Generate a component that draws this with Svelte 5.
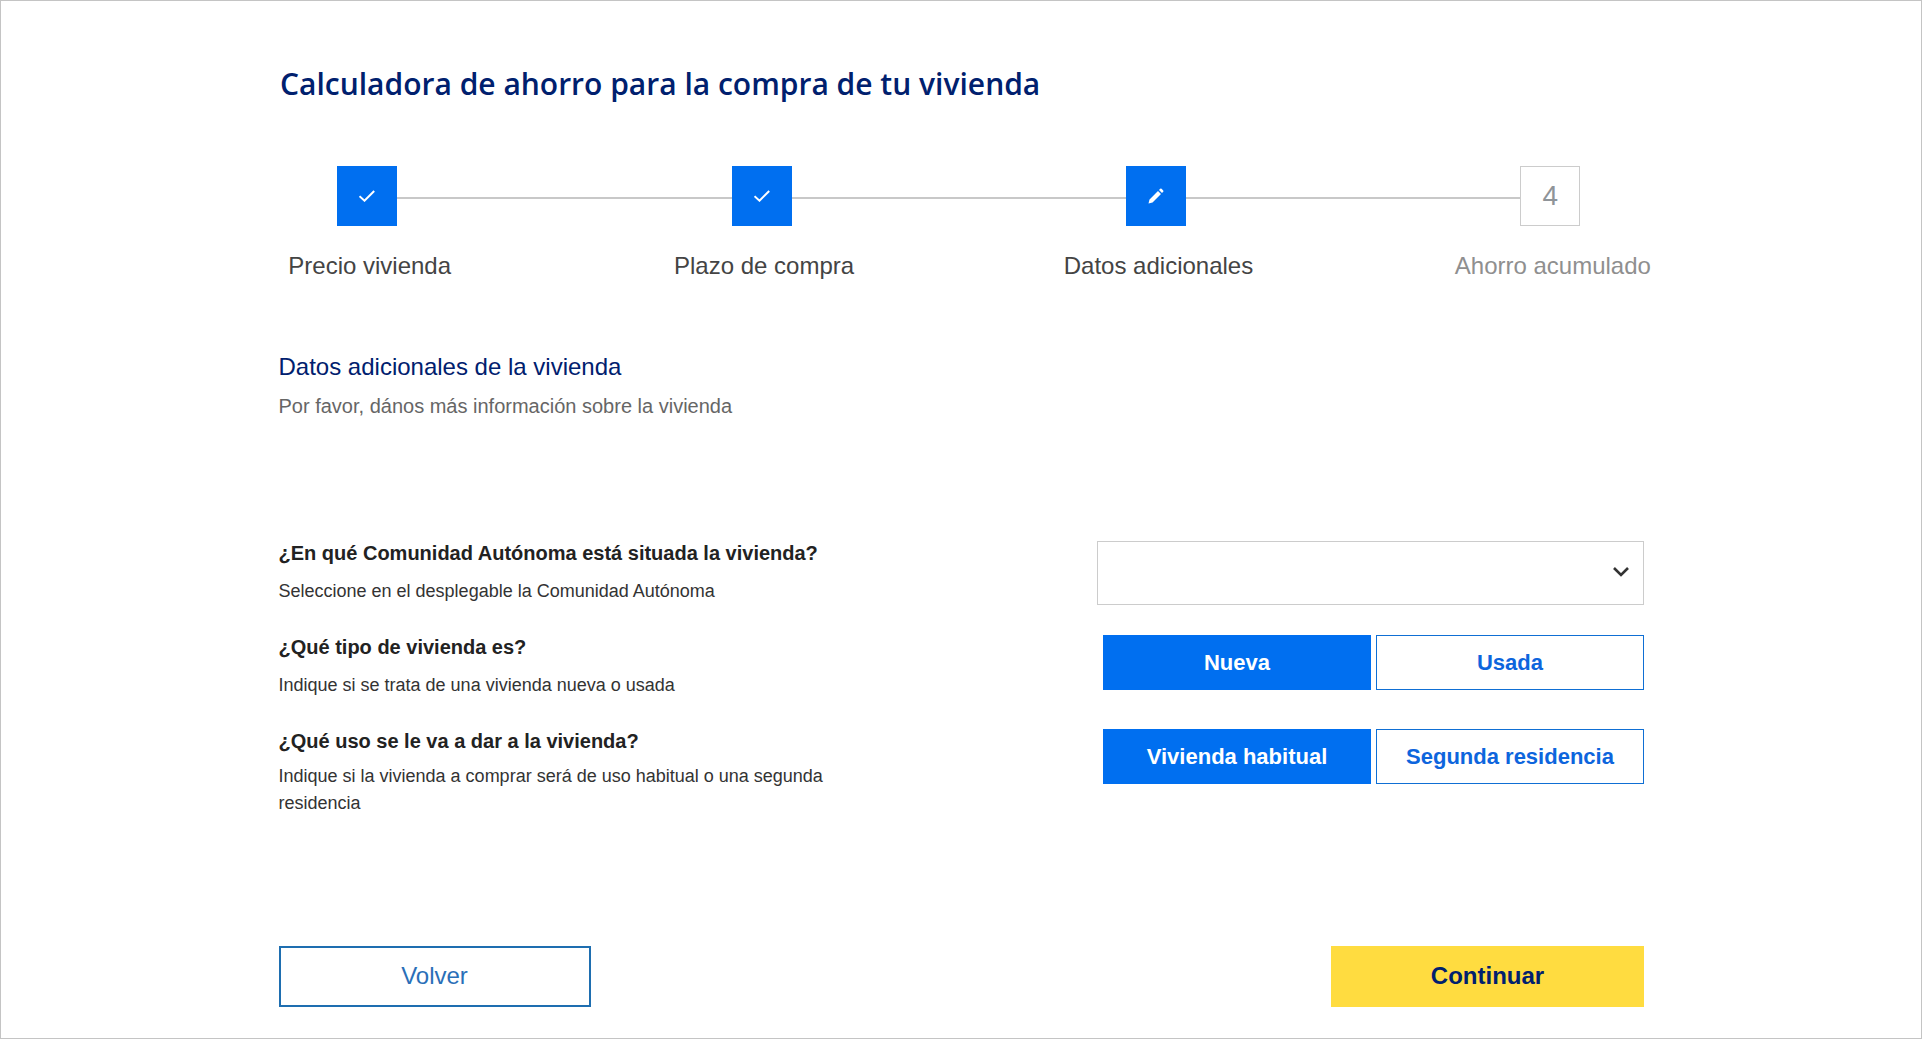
<script>
const steps = [
  { label: 'Precio vivienda', state: 'done' },
  { label: 'Plazo de compra', state: 'done' },
  { label: 'Datos adicionales', state: 'edit' },
  { label: 'Ahorro acumulado', state: 'todo', n: 4 }
];
const rows = [
  { q: '¿En qué Comunidad Autónoma está situada la vivienda?', d: 'Seleccione en el desplegable la Comunidad Autónoma', select: true },
  { q: '¿Qué tipo de vivienda es?', d: 'Indique si se trata de una vivienda nueva o usada', a: 'Nueva', b: 'Usada' },
  { q: '¿Qué uso se le va a dar a la vivienda?', d: 'Indique si la vivienda a comprar será de uso habitual o una segunda residencia', a: 'Vivienda habitual', b: 'Segunda residencia', tight: true }
];
</script>

<div class="page">
  <h1>Calculadora de ahorro para la compra de tu vivienda</h1>
  <div class="steps">
    {#each steps as s, i}
      <div class="step {s.state}">
        {#if i < 3}<span class="line"></span>{/if}
        <div class="box">
          {#if s.state === 'done'}
            <svg width="16" height="12" viewBox="0 0 16 12"><path d="M.5 6.200l5 4.500L15.200 1" fill="none" stroke="#fff" stroke-width="2"/></svg>
          {:else if s.state === 'edit'}
            <svg width="16" height="16" viewBox="0 0 16 16"><path d="M.5 15.500l1-4L10 3l3 3-8.500 8.500zM11 2l1.200-1.200a1 1 0 0 1 1.400 0l1.600 1.600a1 1 0 0 1 0 1.400L14 5z" fill="#fff"/></svg>
          {:else}{s.n}{/if}
        </div>
        <div class="lab">{s.label}</div>
      </div>
    {/each}
  </div>
  <h2>Datos adicionales de la vivienda</h2>
  <p class="sub">Por favor, dános más información sobre la vivienda</p>
  <div class="rows">
    {#each rows as r}
      <div class="row">
        <div class="txt">
          <div class="q">{r.q}</div>
          <div class="d" class:tight={r.tight}>{r.d}</div>
        </div>
        {#if r.select}
          <div class="select">
            <svg width="18" height="11" viewBox="0 0 18 11"><path d="M2 2l7 7 7-7" fill="none" stroke="#333" stroke-width="2.600"/></svg>
          </div>
        {:else}
          <div class="btns">
            <button class="on">{r.a}</button>
            <button>{r.b}</button>
          </div>
        {/if}
      </div>
    {/each}
  </div>
  <div class="foot">
    <button class="back">Volver</button>
    <button class="next">Continuar</button>
  </div>
</div>

<style>
:global(body) { margin: 0; background: #fff; }
.page { box-sizing: border-box; width: 1922px; height: 1039px; border: 1px solid #c4c4c4; padding: 0 277px 0 277.5px; font-family: "Liberation Sans", sans-serif; overflow: hidden; }
h1 { margin: 63px 0 0 1.5px; font: 600 30px/40px "Open Sans", sans-serif; color: #00206e; }
.steps { display: grid; grid-template-columns: repeat(4, 394.4px); margin: 62px 0 0 -108.5px; }
.step { position: relative; display: flex; flex-direction: column; align-items: center; }
.line { position: absolute; left: 50%; width: 100%; top: 31px; height: 2px; background: #c8c8c8; }
.box { position: relative; box-sizing: border-box; width: 60px; height: 60px; display: flex; align-items: center; justify-content: center; background: #006ff0; }
.todo .box { background: #fff; border: 1px solid #ccc; color: #8f9499; font-size: 28px; }
.lab { margin-top: 26px; padding-left: 5px; font-size: 24px; line-height: 28px; color: #444; }
.todo .lab { color: #8f8f8f; }
h2 { margin: 73px 0 0; font-size: 24px; font-weight: 400; line-height: 28px; color: #00206e; }
.sub { margin: 11px 0 0; font-size: 20px; line-height: 28px; color: #666; }
.rows { margin-top: 121px; }
.row { display: flex; justify-content: space-between; min-height: 94px; }
.txt { width: 580px; }
.q { font-size: 20px; font-weight: 700; line-height: 26px; color: #222; margin-top: -1px; }
.d { margin-top: 12px; font-size: 18px; line-height: 27px; color: #333; }
.d.tight { margin-top: 9px; }
.select { box-sizing: border-box; width: 547px; height: 64px; margin-bottom: -1px; border: 1px solid #ccc; display: flex; align-items: center; justify-content: flex-end; padding: 0 13px 3px 0; }
.btns { display: flex; gap: 5px; }
.btns button { box-sizing: border-box; width: 268px; height: 55px; border: 1px solid #0f6fd4; background: #fff; color: #0d65dd; font: 700 22px "Liberation Sans", sans-serif; padding: 0; }
.btns button.on { background: #006ff0; border-color: #006ff0; color: #fff; }
.foot { display: flex; justify-content: space-between; margin-top: 123px; }
.foot button { box-sizing: border-box; width: 312px; height: 61px; font: 24px "Liberation Sans", sans-serif; padding: 0 0 2px; }
.back { background: #fff; border: 2px solid #1e6eb0; color: #2a6fb8; }
.foot button.next { width: 313px; background: #ffdc40; border: 0; color: #00206e; font-weight: 700; }
</style>
